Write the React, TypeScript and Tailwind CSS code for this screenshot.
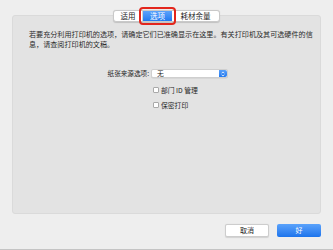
import React from "react";

const font = { fontFamily: '"Noto Sans CJK SC", "Noto Sans", sans-serif' };

export default function App() {
  return (
    <div
      className="w-[333px] h-[250px] bg-[#eeeeee] flex flex-col border-b border-[#c4c4c4] overflow-hidden text-[#262626]"
      style={font}
    >
      {/* tabs */}
      <div className="relative z-10 flex justify-center pt-[10px]">
        <div className="flex h-[12px] items-stretch rounded-[3px] border border-[#c9c9c9] bg-white shadow-[0_0.5px_1px_rgba(0,0,0,0.15)]">
          <div className="w-[29px] flex items-center justify-center text-[7.5px] leading-none border-r border-[#d0d0d0]">
            适用
          </div>
          <div className="relative w-[29px] flex items-center justify-center text-[7.5px] leading-none text-white bg-gradient-to-b from-[#5aa2fb] to-[#1f7af0]">
            选项
            <div className="absolute -left-[4px] -right-[4px] -top-[4px] -bottom-[4px] rounded-[4px] border-2 border-[#e3261c]" />
          </div>
          <div className="w-[47px] flex items-center justify-center text-[7.5px] leading-none">
            耗材余量
          </div>
        </div>
      </div>

      {/* panel */}
      <div className="mx-[12px] -mt-[7px] h-[199px] rounded-[3px] bg-[#e3e3e3] border border-[#dadada] flex flex-col">
        <div className="pt-[13px] pl-[16px] text-[7.1px] leading-[10px] text-[#2a2a2a]">
          若要充分利用打印机的选项，请确定它们已准确显示在这里。有关打印机及其可选硬件的信
          <br />
          息，请查阅打印机的文稿。
        </div>

        <div className="mt-[20px] ml-[93px] flex flex-col">
          <div className="flex items-center h-[9px]">
            <div className="w-[43px] text-right text-[6.6px] leading-none whitespace-nowrap">纸张来源选项:</div>
            <div className="ml-[2px] w-[77px] h-[9px] flex items-stretch rounded-[2px] bg-white border border-[#cfcfcf] shadow-[0_0.5px_0.5px_rgba(0,0,0,0.1)]">
              <div className="flex-1 flex items-center pl-[5px] text-[6.8px] leading-none">无</div>
              <div className="w-[8px] rounded-r-[2px] bg-gradient-to-b from-[#58a0fa] to-[#1f78ee] flex items-center justify-center">
                <svg width="4" height="6" viewBox="0 0 4 6">
                  <path d="M0.6 2.3 L2 0.9 L3.4 2.3" fill="none" stroke="white" strokeWidth="0.8" />
                  <path d="M0.6 3.7 L2 5.1 L3.4 3.7" fill="none" stroke="white" strokeWidth="0.8" />
                </svg>
              </div>
            </div>
          </div>

          <div className="mt-[9px] ml-[47px] flex items-center h-[6px]">
            <div className="w-[6px] h-[6px] bg-white border border-[#a9a9a9] rounded-[1px]" />
            <div className="ml-[2px] text-[6.8px] leading-none whitespace-nowrap">部门 ID 管理</div>
          </div>

          <div className="mt-[9px] ml-[47px] flex items-center h-[6px]">
            <div className="w-[6px] h-[6px] bg-white border border-[#a9a9a9] rounded-[1px]" />
            <div className="ml-[2px] text-[6.8px] leading-none whitespace-nowrap">保密打印</div>
          </div>
        </div>
      </div>

      {/* buttons */}
      <div className="mt-[10px] mr-[12px] flex justify-end gap-[8px]">
        <div className="w-[44px] h-[13px] flex items-center justify-center bg-white border border-[#cdcdcd] rounded-[2px] text-[7px] leading-none shadow-[0_0.5px_1px_rgba(0,0,0,0.12)]">
          取消
        </div>
        <div className="w-[44px] h-[13px] flex items-center justify-center rounded-[2px] text-white text-[7px] leading-none bg-gradient-to-b from-[#5aa2fb] to-[#1b74ec]">
          好
        </div>
      </div>
    </div>
  );
}
